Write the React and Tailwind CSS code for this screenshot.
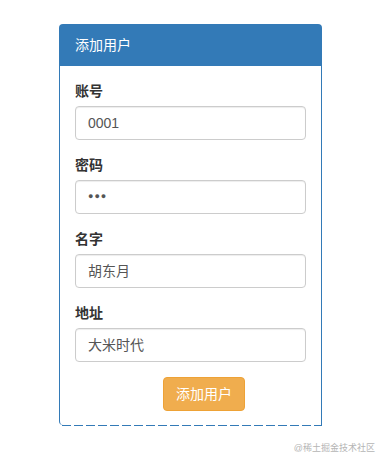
import React from "react";

const font = { fontFamily: '"Liberation Sans", "Noto Sans CJK SC", sans-serif' };

function Field({ label, children }) {
  return (
    <div className="mb-[15px]">
      <div className="mb-[5px] h-5 text-[14px] leading-5 font-bold text-[#333]">{label}</div>
      <div className="flex h-[34px] items-center rounded-[4px] border border-[#ccc] bg-white px-3 text-[14px] text-[#555] shadow-[inset_0_1px_1px_rgba(0,0,0,0.075)]">
        {children}
      </div>
    </div>
  );
}

export default function App() {
  return (
    <div className="relative h-[457px] w-[379px] bg-white" style={font}>
      <div className="pl-[59px] pt-[24px]">
        <div className="w-[263px]">
          <div className="rounded-t-[4px] rounded-bl-[4px] border-x border-t border-[#337ab7]">
            <div className="flex h-[41px] items-center bg-[#337ab7] px-[15px] text-[14px] text-white">添加用户</div>
            <div className="p-[15px] pb-[14px]">
              <Field label="账号">0001</Field>
              <Field label="密码">
                <span className="text-[9px] tracking-[1px]">●●●</span>
              </Field>
              <Field label="名字">胡东月</Field>
              <Field label="地址">大米时代</Field>
              <div className="pl-[88px]">
                <div className="flex h-[34px] w-[82px] items-center justify-center rounded-[4px] border border-[#eea236] bg-[#f0ad4e] text-[14px] text-white">
                  添加用户
                </div>
              </div>
            </div>
          </div>
          <div className="ml-[3px] h-px bg-[repeating-linear-gradient(90deg,#337ab7_0_9px,transparent_9px_12px)]"></div>
        </div>
      </div>
      <div className="absolute right-[4px] top-[442px] text-[9px] text-[#b5b5b5]">@稀土掘金技术社区</div>
    </div>
  );
}
